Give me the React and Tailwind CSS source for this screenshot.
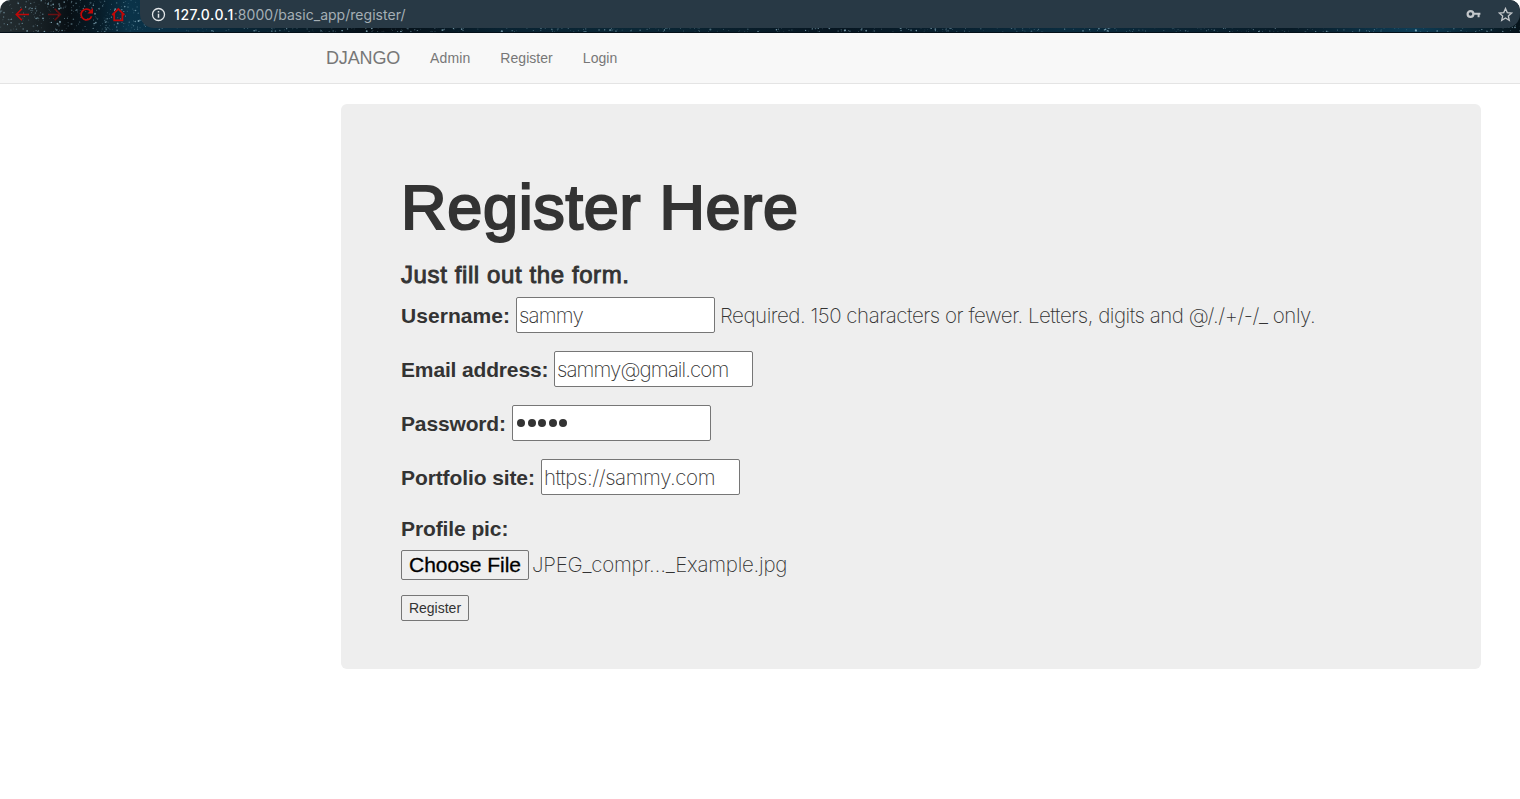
import React from "react";

function makeStars(count) {
  let seed = 71;
  const next = () => {
    seed = (seed * 16807) % 2147483647;
    return seed / 2147483647;
  };
  return Array.from({ length: count }, () => ({
    x: next() * 1520,
    y: next() * 33,
    r: 0.35 + next() * next() * 0.85,
    o: 0.25 + next() * 0.6,
  }));
}

const headerStars = makeStars(3000);

function Starfield() {
  return (
    <svg className="absolute inset-0" width="1520" height="33" viewBox="0 0 1520 33" aria-hidden="true">
      <defs>
        <linearGradient id="sky">
          <stop offset="0" stopColor="#242d31" />
          <stop offset="0.02" stopColor="#1c2529" />
          <stop offset="0.045" stopColor="#080f14" />
          <stop offset="0.065" stopColor="#071c28" />
          <stop offset="0.085" stopColor="#0a3349" />
          <stop offset="0.12" stopColor="#082c41" />
          <stop offset="0.18" stopColor="#08212f" />
          <stop offset="0.25" stopColor="#050e15" />
          <stop offset="0.33" stopColor="#082231" />
          <stop offset="0.42" stopColor="#0a2736" />
          <stop offset="0.55" stopColor="#061520" />
          <stop offset="0.7" stopColor="#0a2c3f" />
          <stop offset="0.85" stopColor="#071a26" />
          <stop offset="0.93" stopColor="#0d3d56" />
          <stop offset="1" stopColor="#06131a" />
        </linearGradient>
      </defs>
      <rect width="1520" height="33" fill="url(#sky)" />
      {headerStars.map((s, i) => (
        <circle key={i} cx={s.x} cy={s.y} r={s.r} fill="#8fb6c6" opacity={s.o} />
      ))}
      <rect y="32" width="1520" height="1" fill="#041019" />
    </svg>
  );
}

function NavIcons() {
  return (
    <svg className="relative shrink-0" width="140" height="33" viewBox="0 0 140 33" fill="none" stroke="#c00808" strokeWidth="1.6" aria-hidden="true">
      <path d="M29 14.5H16.5M22 8.8l-5.7 5.7 5.7 5.7" />
      <path d="M48 14.5h12M54.7 8.8l5.7 5.7-5.7 5.7" opacity="0.5" />
      <path d="M91.6 16.2a5.4 5.4 0 1 1-1.2-5.5" strokeWidth="1.8" />
      <path d="M93 8v5.6h-5.6z" fill="#c00808" stroke="none" />
      <path d="M112.2 15l6.1-6.1 6.1 6.1M114.2 13.4v7h8.2v-7" strokeWidth="1.8" />
    </svg>
  );
}

function BrowserBar() {
  return (
    <header className="relative flex h-[33px] items-start overflow-hidden rounded-t-[10px]">
      <Starfield />
      <NavIcons />
      <div className="relative flex h-7 flex-1 items-center rounded-b-[14px] rounded-tr-[10px] bg-[#283945] pl-[11px] pr-[7px]">
        <svg width="15" height="15" viewBox="0 0 15 15" fill="none" aria-hidden="true">
          <circle cx="7.5" cy="7.5" r="6" stroke="#e2e5e7" strokeWidth="1.3" />
          <path d="M7.5 6.7v4M7.5 4v1.5" stroke="#e2e5e7" strokeWidth="1.5" />
        </svg>
        <span className="ml-2 flex-1 whitespace-nowrap pt-px font-['Inter'] text-[14px] leading-7 text-[#a5afb5]">
          <span className="font-medium tracking-[0.58px] text-white">127.0.0.1</span>
          <span className="tracking-[0.03px]">:8000/basic_app/register/</span>
        </span>
        <svg className="mr-[17px]" width="15" height="10" viewBox="0 0 15 10" fill="none" aria-hidden="true">
          <circle cx="4.5" cy="5" r="2.9" stroke="#c3c7ca" strokeWidth="2.2" />
          <path d="M7.5 4.8h6.9M12.6 4.8v3.5" stroke="#c3c7ca" strokeWidth="2" />
        </svg>
        <svg width="15" height="15" viewBox="0 0 15 15" fill="none" aria-hidden="true">
          <path d="M7.5 1.5l1.75 4.1 4.45.4-3.4 2.9 1 4.4-3.8-2.3-3.8 2.3 1-4.4L1.3 6l4.45-.4z" stroke="#c3c7ca" strokeWidth="1.3" />
        </svg>
      </div>
    </header>
  );
}

function Navbar() {
  return (
    <nav className="flex h-[51px] items-center border-b border-[#e4e4e4] bg-[#f8f8f8] pl-[326px] text-[14px] text-[#777]">
      <a className="text-[18px] tracking-[-0.15px]">DJANGO</a>
      <a className="ml-[30px] tracking-[0.1px]">Admin</a>
      <a className="ml-[30px] tracking-[0.05px]">Register</a>
      <a className="ml-[30px] tracking-[0.05px]">Login</a>
    </nav>
  );
}

const light = "font-['Inter'] font-extralight text-[20.5px]";

function Field({ label, labelClass, value, valueClass, type = "text", help }) {
  return (
    <div className="mb-[18px] flex h-9 items-center whitespace-nowrap">
      <label className={"shrink-0 pt-0.5 text-[21px] font-bold leading-9 " + labelClass}>{label}</label>
      {type === "password" ? (
        <div role="textbox" className="flex h-9 w-[199px] items-center gap-[2.5px] rounded-[2px] border border-[#767676] bg-white pl-[4px]">
          {[0, 1, 2, 3, 4].map((n) => (
            <span key={n} className="h-2 w-2 rounded-full bg-[#333]" />
          ))}
        </div>
      ) : (
        <input
          readOnly
          type={type}
          value={value}
          className={"h-9 w-[199px] rounded-[2px] border border-[#767676] bg-white px-[2px] pt-px outline-none " + light + " " + valueClass}
        />
      )}
      {help && <span className={"ml-[5px] pt-0.5 leading-9 tracking-[-0.47px] " + light}>{help}</span>}
    </div>
  );
}

export default function App() {
  return (
    <div className="h-[799px] w-[1520px] overflow-hidden bg-white font-['Liberation_Sans',Arial,sans-serif] text-[#333]">
      <BrowserBar />
      <Navbar />
      <main className="ml-[341px] mt-5 h-[565px] w-[1140px] rounded-[6px] bg-[#eee] px-[60px] pt-[68px]">
        <h1 className="whitespace-nowrap text-[63px] leading-[70px] tracking-[0.7px] [-webkit-text-stroke:2.2px_#333]">Register Here</h1>
        <h3 className="mt-5 whitespace-nowrap text-[24px] leading-[26px] tracking-[0.6px] [-webkit-text-stroke:0.9px_#333]">Just fill out the form.</h3>
        <form className="mt-[9px]">
          <Field label="Username:" labelClass="w-[115px] tracking-[0.05px]" value="sammy" valueClass="tracking-[-0.8px]" help="Required. 150 characters or fewer. Letters, digits and @/./+/-/_ only." />
          <Field label="Email address:" labelClass="w-[153px] tracking-[-0.15px]" value="sammy@gmail.com" valueClass="tracking-[-0.9px]" />
          <Field label="Password:" labelClass="w-[111px] tracking-[-0.15px]" type="password" />
          <Field label="Portfolio site:" labelClass="w-[140px] tracking-[-0.1px]" value="https://sammy.com" valueClass="tracking-[-0.42px]" />
          <div className="pt-px text-[21px] font-bold leading-[30px] tracking-[-0.1px]">Profile pic:</div>
          <div className="mt-[6px] flex h-[30px] items-center whitespace-nowrap">
            <button type="button" className="h-[30px] w-32 rounded-[2px] border border-[#767676] bg-[#efefef] text-[21px] leading-7 text-black [-webkit-text-stroke:0.3px_#000]">Choose File</button>
            <span className={"ml-[3px] tracking-[-0.24px] " + light}>JPEG_compr…_Example.jpg</span>
          </div>
          <button type="button" className="mt-[15px] block h-[26px] w-[68px] rounded-[2px] border border-[#767676] bg-[#efefef] text-[14px] leading-6">Register</button>
        </form>
      </main>
    </div>
  );
}
